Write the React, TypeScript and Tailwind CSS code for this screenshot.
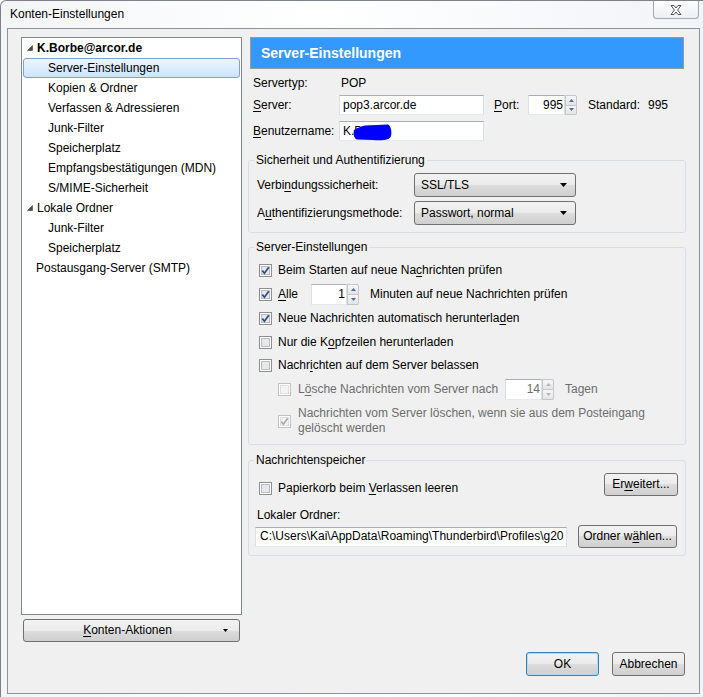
import React from 'react';

const btn =
  'border border-[#707070] rounded-[3px] bg-[linear-gradient(#f2f2f2,#ebebeb_50%,#dddddd_50%,#cfcfcf)] flex items-center justify-center';
const field = 'h-[20px] bg-white border border-[#abadb3] border-x-[#dbdfe6] border-b-[#e3e9ef]';

function U({ children }: { children: React.ReactNode }) {
  return <span className="underline underline-offset-[2px]">{children}</span>;
}

function Check({ checked = false, disabled = false }: { checked?: boolean; disabled?: boolean }) {
  return (
    <svg width="13" height="13" viewBox="0 0 13 13" className="shrink-0">
      <rect x="0.5" y="0.5" width="12" height="12" fill="#fff" stroke={disabled ? '#c2c2c2' : '#8e8f8f'} />
      <rect x="2.5" y="2.5" width="8" height="8" fill={disabled ? '#f4f4f4' : '#e6e8eb'} stroke={disabled ? '#dedede' : '#b9bdc3'} />
      {checked && (
        <path
          d="M3.3 6.6 L5.4 9.2 L9.8 3.3"
          fill="none"
          stroke={disabled ? '#a9a9a9' : '#2d4a80'}
          strokeWidth="1.7"
        />
      )}
    </svg>
  );
}

function Spin({ disabled = false }: { disabled?: boolean }) {
  const c = disabled ? '#b7b7b7' : '#4d6a9c';
  const part =
    'flex-1 flex items-center justify-center border border-[#c3c6cb] bg-[linear-gradient(#f6f6f6,#e4e4e4)]';
  return (
    <div className="flex flex-col w-[12px] h-full">
      <div className={`${part} rounded-tr-[2px]`}>
        <svg width="5" height="3" viewBox="0 0 5 3">
          <path d="M0 3 L2.5 0 L5 3Z" fill={c} />
        </svg>
      </div>
      <div className={`${part} border-t-0 rounded-br-[2px]`}>
        <svg width="5" height="3" viewBox="0 0 5 3">
          <path d="M0 0 L5 0 L2.5 3Z" fill={c} />
        </svg>
      </div>
    </div>
  );
}

function Select({ value }: { value: string }) {
  return (
    <div className={`w-[162px] h-[24px] ${btn} !justify-start pl-[6px] pr-[8px]`}>
      <span className="flex-1">{value}</span>
      <svg width="7" height="4" viewBox="0 0 7 4">
        <path d="M0 0h7L3.5 4z" fill="#000" />
      </svg>
    </div>
  );
}

function CheckRow({
  checked,
  children,
  className = 'h-[24px]',
}: {
  checked?: boolean;
  children: React.ReactNode;
  className?: string;
}) {
  return (
    <div className={`flex items-center ${className}`}>
      <Check checked={checked} />
      <span className="ml-[6px]">{children}</span>
    </div>
  );
}

function Group({ title, children, className = '' }: { title: string; children: React.ReactNode; className?: string }) {
  return (
    <fieldset className={`border border-[#d5dfe5] rounded-[3px] ${className}`}>
      <legend className="ml-[5px] px-[2px] leading-[16px]">{title}</legend>
      {children}
    </fieldset>
  );
}

type TreeItem = { label: string; level: 'account' | 'child' | 'top'; selected?: boolean };

const tree: TreeItem[] = [
  { label: 'K.Borbe@arcor.de', level: 'account' },
  { label: 'Server-Einstellungen', level: 'child', selected: true },
  { label: 'Kopien & Ordner', level: 'child' },
  { label: 'Verfassen & Adressieren', level: 'child' },
  { label: 'Junk-Filter', level: 'child' },
  { label: 'Speicherplatz', level: 'child' },
  { label: 'Empfangsbestätigungen (MDN)', level: 'child' },
  { label: 'S/MIME-Sicherheit', level: 'child' },
  { label: 'Lokale Ordner', level: 'top' },
  { label: 'Junk-Filter', level: 'child' },
  { label: 'Speicherplatz', level: 'child' },
  { label: 'Postausgang-Server (SMTP)', level: 'top' },
];

function Expander() {
  return (
    <svg width="6" height="6" viewBox="0 0 6 6" className="shrink-0">
      <path d="M5.5 0.5 L5.5 5.5 L0.5 5.5Z" fill="#4a4a4a" stroke="#4a4a4a" strokeWidth="0.6" />
    </svg>
  );
}

export default function App() {
  return (
    <div className="relative w-[703px] h-[697px] overflow-hidden flex flex-col font-['Liberation_Sans',Arial,sans-serif] text-[12px] leading-[15px] text-black bg-[linear-gradient(90deg,#f3f5f8,#ffffff_45%,#f1f4f8)] border-l border-t border-[#7d8188] rounded-tl-[6px]">
      {/* title bar */}
      <div className="h-[27px] flex items-center pl-[9px] shrink-0">Konten-Einstellungen</div>
      <div className="absolute top-0 right-[4px] w-[46px] h-[18px] flex items-center justify-center border border-t-0 border-[#a3a8af] rounded-b-[4px] bg-[linear-gradient(#fdfdfe,#eceff3)]">
        <svg width="12" height="10" viewBox="0 0 12 10">
          <path
            d="M1 0.5 H4 L6 3 L8 0.5 H11 L7.6 5 L11 9.5 H8 L6 7 L4 9.5 H1 L4.4 5 Z"
            fill="#fff"
            stroke="#4f4f4f"
            strokeWidth="1"
            strokeLinejoin="round"
          />
        </svg>
      </div>

      {/* client area */}
      <div className="ml-[6px] w-[693px] h-[666px] shrink-0 border border-[#8e9399] bg-[#f0f0f0] flex flex-col pl-[13px] pt-[8px]">
        <div className="flex">
          {/* left column */}
          <div className="w-[221px] flex flex-col shrink-0">
            <div className="h-[578px] border border-[#828790] bg-white">
              {tree.map((t, i) => {
                const expandable = t.level === 'account' || t.label === 'Lokale Ordner';
                const pad = t.level === 'child' ? 'pl-[24px]' : expandable ? 'pl-[3px]' : 'pl-[12px]';
                return (
                  <div
                    key={i}
                    className={`mx-[1px] h-[20px] flex items-center border rounded-[3px] ${pad} ${
                      t.selected
                        ? 'border-[#7da2ce] bg-[linear-gradient(#ebf4fe,#cfe4fa)]'
                        : 'border-transparent'
                    }`}
                  >
                    {expandable && <Expander />}
                    <span className={`${t.level === 'account' ? 'font-bold' : ''} ${expandable ? 'ml-[4px]' : ''}`}>
                      {t.label}
                    </span>
                  </div>
                );
              })}
            </div>
            <div className={`mt-[4px] ml-[2px] w-[217px] h-[23px] ${btn} !justify-start pl-[8px] pr-[11px]`}>
              <span className="flex-1 text-center">
                <U>K</U>onten-Aktionen
              </span>
              <svg width="5" height="3" viewBox="0 0 5 3">
                <path d="M0 0h5L2.5 3z" fill="#000" />
              </svg>
            </div>
          </div>

          {/* right column */}
          <div className="ml-[6px] w-[438px] flex flex-col">
            <div className="mx-[2px] h-[32px] border border-[#9a9a9a] bg-[#3399ff] text-white font-bold text-[14px] pl-[10px] flex items-center">
              Server-Einstellungen
            </div>

            <div className="pl-[5px]">
              <div className="mt-[4px] h-[20px] flex items-center">
                <span className="w-[86px]">Servertyp:</span>
                <span className="pl-[2px]">POP</span>
              </div>
              <div className="mt-[2px] h-[20px] flex items-center">
                <span className="w-[86px]">
                  <U>S</U>erver:
                </span>
                <div className={`${field} w-[145px] pl-[3px] flex items-center`}>pop3.arcor.de</div>
                <span className="ml-[10px] w-[34px]">
                  <U>P</U>ort:
                </span>
                <div className={`${field} w-[37px] pr-[1px] flex items-center justify-end`}>995</div>
                <Spin />
                <span className="ml-[11px] w-[60px]">Standard:</span>
                <span>995</span>
              </div>
              <div className="mt-[6px] h-[20px] flex items-center">
                <span className="w-[86px]">
                  <U>B</U>enutzername:
                </span>
                <div className={`${field} relative w-[145px] pl-[3px] flex items-center`}>
                  K.B
                  <svg width="39" height="17" viewBox="0 0 39 17" className="absolute left-[13px] top-[2px]">
                    <path
                      d="M1 6 C4 4 8 2.5 12 1.5 L35 0.5 C38 2 39 8 38 12 C37 16 30 17 20 16 L4 15.5 C1 14.5 0 10 1 6 Z"
                      fill="#0000ff"
                    />
                  </svg>
                </div>
              </div>
            </div>

            <Group title="Sicherheit und Authentifizierung" className="mt-[11px]">
              <div className="pl-[8px] pt-[5px] pb-[7px] flex flex-col gap-[4px]">
                <div className="flex items-center">
                  <span className="w-[157px]">
                    Verbi<U>n</U>dungssicherheit:
                  </span>
                  <Select value="SSL/TLS" />
                </div>
                <div className="flex items-center">
                  <span className="w-[157px]">
                    A<U>u</U>thentifizierungsmethode:
                  </span>
                  <Select value="Passwort, normal" />
                </div>
              </div>
            </Group>

            <Group title="Server-Einstellungen" className="mt-[6px]">
              <div className="pl-[10px] pt-[3px] pb-[8px] flex flex-col">
                <CheckRow checked>
                  Beim Starten auf neue Na<U>c</U>hrichten prüfen
                </CheckRow>
                <div className="h-[24px] flex items-center">
                  <Check checked />
                  <span className="ml-[6px] w-[33px]">
                    <U>A</U>lle
                  </span>
                  <div className="h-[21px] flex">
                    <div className={`${field} !h-[21px] w-[36px] pr-[1px] flex items-center justify-end`}>1</div>
                    <Spin />
                  </div>
                  <span className="ml-[11px]">Minuten auf neue Nachrichten prüfen</span>
                </div>
                <CheckRow checked>
                  Neue Nachrichten automatisch herunterla<U>d</U>en
                </CheckRow>
                <CheckRow>
                  Nur die K<U>o</U>pfzeilen herunterladen
                </CheckRow>
                <CheckRow className="h-[23px]">
                  Nachr<U>i</U>chten auf dem Server belassen
                </CheckRow>
                <div className="h-[24px] pl-[19px] flex items-center text-[#6d6d6d]">
                  <Check disabled />
                  <span className="ml-[7px] w-[207px]">
                    L<U>ö</U>sche Nachrichten vom Server nach
                  </span>
                  <div className="h-[21px] flex">
                    <div className={`${field} !h-[21px] w-[37px] pr-[1px] flex items-center justify-end`}>14</div>
                    <Spin disabled />
                  </div>
                  <span className="ml-[11px]">Tagen</span>
                </div>
                <div className="mt-[5px] pl-[19px] flex items-center text-[#6d6d6d]">
                  <Check checked disabled />
                  <span className="ml-[7px] w-[360px]">
                    Nachrichten vom Server löschen, wenn sie aus dem Posteingang gelöscht werden
                  </span>
                </div>
              </div>
            </Group>

            <Group title="Nachrichtenspeicher" className="mt-[7px]">
              <div className="pl-[8px] pr-[7px] pt-[5px] pb-[7px] flex flex-col">
                <div className="flex items-start justify-between">
                  <div className="mt-[8px] ml-[2px] h-[15px] flex items-center">
                    <Check />
                    <span className="ml-[6px]">
                      Papierkorb beim <U>V</U>erlassen leeren
                    </span>
                  </div>
                  <div className={`${btn} w-[74px] h-[23px]`}>
                    Er<U>w</U>eitert...
                  </div>
                </div>
                <div className="mt-[12px] h-[15px] flex items-center">Lokaler Ordner:</div>
                <div className="mt-[2px] flex items-center">
                  <div
                    className={`${field} -ml-[2px] w-[312px] pl-[4px] flex items-center overflow-hidden whitespace-nowrap`}
                  >
                    {'C:\\Users\\Kai\\AppData\\Roaming\\Thunderbird\\Profiles\\g20'}
                  </div>
                  <div className={`${btn} ml-[11px] w-[99px] h-[23px]`}>
                    Ordner w<U>ä</U>hlen...
                  </div>
                </div>
              </div>
            </Group>
          </div>
        </div>

        {/* dialog buttons */}
        <div className="mt-[10px] pr-[14px] flex justify-end gap-[13px]">
          <div className={`${btn} w-[73px] h-[24px] !border-[#3c7fb1] shadow-[inset_0_0_0_1px_#a9dcf8]`}>OK</div>
          <div className={`${btn} w-[73px] h-[24px]`}>Abbrechen</div>
        </div>
      </div>
    </div>
  );
}
